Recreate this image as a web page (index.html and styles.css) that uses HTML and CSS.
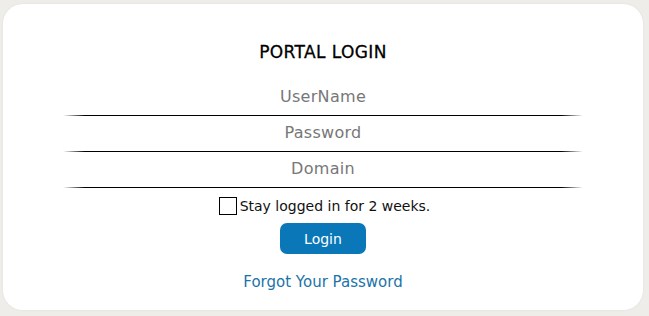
FILE: index.html
```html
<!DOCTYPE html>
<html lang="en">
<head>
<meta charset="utf-8">
<title>Portal Login</title>
<link rel="stylesheet" href="styles.css">
</head>
<body>
<main class="card">
  <h1 class="title">PORTAL LOGIN</h1>
  <form class="form">
    <input class="field" type="text" placeholder="UserName">
    <input class="field" type="password" placeholder="Password">
    <input class="field" type="text" placeholder="Domain">
    <label class="remember"><span class="box"></span><span>Stay logged in for 2 weeks.</span></label>
    <button class="btn" type="button">Login</button>
    <a class="forgot" href="#">Forgot Your Password</a>
  </form>
</main>
</body>
</html>
```
FILE: styles.css
```css
html, body {
  margin: 0;
  padding: 0;
}
body {
  background: #eeede9;
  font-family: "DejaVu Sans", sans-serif;
  width: 649px;
  height: 316px;
  overflow: hidden;
}
.card {
  box-sizing: border-box;
  margin: 4px 0 0 3px;
  width: 640px;
  height: 306px;
  background: #fff;
  border-radius: 20px;
  box-shadow: 0 0 3px rgba(0, 0, 0, 0.06);
  display: flex;
  flex-direction: column;
  align-items: center;
  padding-top: 38px;
}
.title {
  margin: 0;
  font-size: 17px;
  font-weight: normal;
  line-height: 20px;
  color: #000;
  letter-spacing: 0.4px;
  -webkit-text-stroke: 0.3px #000;
}
.form {
  display: flex;
  flex-direction: column;
  align-items: center;
  margin-top: 18px;
}
.field {
  box-sizing: border-box;
  width: 520px;
  height: 36px;
  margin: 0;
  padding: 0 0 3px;
  border: none;
  outline: none;
  font-family: inherit;
  font-size: 16px;
  text-align: center;
  background: linear-gradient(to right, rgba(0,0,0,0), #000 22px, #000 calc(100% - 22px), rgba(0,0,0,0)) left bottom / 100% 1px no-repeat;
}
.field::placeholder {
  color: #777;
  letter-spacing: 0.3px;
}
.remember {
  display: flex;
  align-items: center;
  gap: 3px;
  margin-top: 9px;
  margin-left: 3px;
  font-size: 14px;
  color: #111;
  height: 18px;
}
.box {
  box-sizing: border-box;
  width: 18px;
  height: 18px;
  border: 1.5px solid #000;
}
.btn {
  margin-top: 8px;
  width: 86px;
  height: 31px;
  border: none;
  border-radius: 7px;
  background: #0a78b8;
  color: #fff;
  font-family: inherit;
  font-size: 14px;
}
.forgot {
  margin-top: 19px;
  font-size: 15px;
  color: #1a73a8;
  text-decoration: none;
}
```
